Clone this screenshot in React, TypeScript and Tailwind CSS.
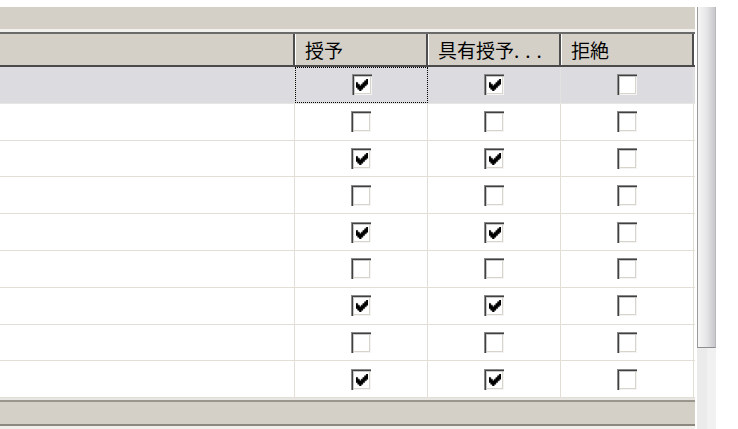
import React from "react";

const CHECK_PATH =
  "M6 0h1v1h-1z M5 1h2v1h-2z M0 2h1v1h-1z M4 2h3v1h-3z M0 3h2v1h-2z M3 3h3v1h-3z M0 4h5v1h-5z M1 5h3v1h-3z M2 6h1v1h-1z";

function Check({ checked }: { checked: boolean }) {
  return (
    <div className="w-[20px] h-[21px] bg-white shadow-[inset_1px_1px_0_#8a8a8a,inset_2px_2px_0_#404040,inset_3px_3px_0_#c8c8c8,inset_-1px_-1px_0_#f4f4f4,inset_-2px_-2px_0_#d8d4cc] flex items-center justify-center">
      {checked && (
        <svg width="12" height="12" viewBox="0 0 7 7" className="ml-[1px] mt-[1px]">
          <path d={CHECK_PATH} fill="#000" stroke="#000" strokeWidth="0.3" strokeLinejoin="round" />
        </svg>
      )}
    </div>
  );
}

function HeaderCell({ w, children, first }: { w: string; children?: React.ReactNode; first?: boolean }) {
  return (
    <div
      className={`${w} h-full bg-[#d4d0c8] border-r-2 border-r-[#4e4e4e] ${
        first ? "" : "border-l border-l-white"
      } flex items-center pl-[9px] text-[19px] leading-none text-black whitespace-nowrap overflow-hidden`}
    >
      {children}
    </div>
  );
}

export default function App() {
  const rows = Array.from({ length: 9 }, (_, i) => i);
  return (
    <div
      className="w-[738px] h-[429px] bg-white overflow-hidden flex"
      style={{ fontFamily: '"Noto Sans CJK JP", "Noto Sans CJK SC", sans-serif' }}
    >
      <div className="w-[695px] flex flex-col pt-[7px]">
        <div className="h-[22px] bg-[#d4d0c8] shrink-0" />
        <div className="h-[3px] bg-[#f2f0ec] shrink-0" />
        <div className="h-[35px] shrink-0 flex border-t-2 border-t-[#6a6a6a] border-b-2 border-b-[#4a4a4a]">
          <HeaderCell w="w-[295px]" first />
          <HeaderCell w="w-[133px]">授予</HeaderCell>
          <HeaderCell w="w-[133px]">
            具有授予<span className="tracking-[6px]">...</span>
          </HeaderCell>
          <HeaderCell w="w-[133px]">拒絶</HeaderCell>
        </div>
        <div className="flex flex-col shrink-0">
          {rows.map((i) => {
            const sel = i === 0;
            const on = i % 2 === 0;
            return (
              <div
                key={i}
                className={`h-[36.8px] flex border-b ${
                  sel ? "bg-[#dcdbe0] border-b-[#e8e6e2]" : "bg-white border-b-[#e2ded6]"
                }`}
              >
                <div className={`w-[295px] h-full border-r ${sel ? "border-r-[#e4e2de]" : "border-r-[#e2ded6]"}`} />
                <div
                  className={`w-[133px] h-full flex items-center justify-center ${
                    sel ? "border border-dotted border-black" : "border-r border-r-[#e2ded6]"
                  }`}
                >
                  <Check checked={on} />
                </div>
                <div className={`w-[133px] h-full flex items-center justify-center border-r ${sel ? "border-r-[#e4e2de]" : "border-r-[#e2ded6]"}`}>
                  <Check checked={on} />
                </div>
                <div className={`w-[133px] h-full flex items-center justify-center border-r ${sel ? "border-r-[#e4e2de]" : "border-r-[#e2ded6]"}`}>
                  <Check checked={false} />
                </div>
              </div>
            );
          })}
        </div>
        <div className="h-[2px] bg-[#e8e6e2] shrink-0" />
        <div className="h-[2px] bg-[#9a968e] shrink-0" />
        <div className="h-[22px] bg-[#d4d0c8] shrink-0" />
        <div className="h-[2px] bg-[#8c8880] shrink-0" />
        <div className="flex-1 bg-[#f0efec]" />
      </div>
      <div className="w-[2px]" />
      <div className="w-[19px] flex flex-col pt-[7px]">
        <div className="h-[341px] border-l border-l-[#9a9a9a] border-r border-r-[#b8b8bc] border-b border-b-[#8e8e92] bg-gradient-to-r from-[#f6f6f6] via-[#e6e6e8] to-[#c8c8cc]" />
        <div className="flex-1 flex">
          <div className="w-[10px] bg-[#ebebeb]" />
          <div className="flex-1 bg-[#f1f1f1]" />
        </div>
      </div>
      <div className="flex-1 bg-white" />
    </div>
  );
}
